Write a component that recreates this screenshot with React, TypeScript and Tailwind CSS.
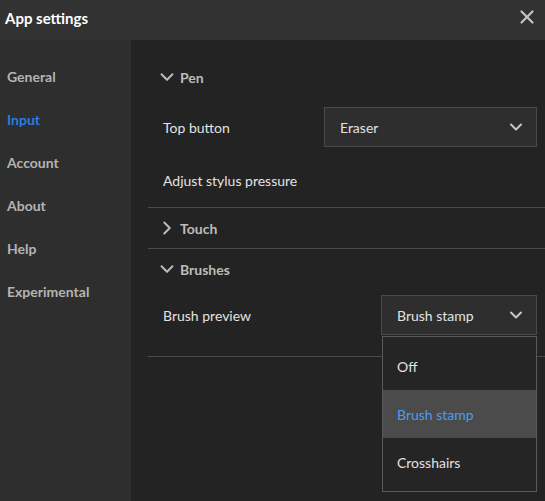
import { ChevronDown, ChevronRight, X } from 'lucide-react';

const navItems = ['General', 'Input', 'Account', 'About', 'Help', 'Experimental'];

function SectionHeader({ label, open }: { label: string; open: boolean }) {
  return (
    <div className="flex h-[40px] items-center gap-[2px] pl-[8px] text-[14px] font-bold text-[#bcbcbc]">
      {open ? (
        <ChevronDown className="h-[22px] w-[22px]" strokeWidth={2.2} />
      ) : (
        <ChevronRight className="h-[22px] w-[22px]" strokeWidth={2.2} />
      )}
      <span>{label}</span>
    </div>
  );
}

function Select({ value, width }: { value: string; width: string }) {
  return (
    <div
      className={`flex h-[40px] items-center justify-between border border-[#4a4a4a] bg-[#2e2e2e] pl-[15px] pr-[10px] text-[14px] text-[#e2e2e2] ${width}`}
    >
      <span>{value}</span>
      <ChevronDown className="h-[20px] w-[20px] text-[#c8c8c8]" strokeWidth={2.4} />
    </div>
  );
}

export default function App() {
  const options = ['Off', 'Brush stamp', 'Crosshairs'];

  return (
    <div
      className="flex h-[501px] w-[545px] flex-col bg-[#232323] text-[14px]"
      style={{ fontFamily: 'Lato, "Noto Sans", sans-serif' }}
    >
      <header className="flex h-[40px] shrink-0 items-start justify-between bg-[#323232] pl-[5px] pr-[7px]">
        <h1 className="mt-[7px] text-[15px] font-bold leading-[22px] text-white">App settings</h1>
        <X className="mt-[6px] h-[22px] w-[22px] text-[#c4c4c4]" strokeWidth={2.4} />
      </header>

      <div className="flex min-h-0 flex-1">
        <nav className="flex w-[131px] shrink-0 flex-col gap-[21px] bg-[#2e2e2e] pl-[7px] pt-[26px]">
          {navItems.map((item) => (
            <div
              key={item}
              className={`h-[22px] font-bold leading-[22px] ${
                item === 'Input' ? 'text-[#2b7be3]' : 'text-[#b4b4b4]'
              }`}
            >
              {item}
            </div>
          ))}
        </nav>

        <main className="flex-1 pl-[17px] pt-[17px]">
          <SectionHeader label="Pen" open />
          <div className="flex h-[60px] items-center justify-between pl-[15px] pr-[8px]">
            <span className="text-[#e2e2e2]">Top button</span>
            <Select value="Eraser" width="w-[213px]" />
          </div>
          <div className="flex h-[50px] items-center pb-[4px] pl-[15px] text-[#e2e2e2]">
            Adjust stylus pressure
          </div>
          <div className="border-t border-[#4a4a4a]">
            <SectionHeader label="Touch" open={false} />
          </div>
          <div className="border-t border-[#4a4a4a]">
            <SectionHeader label="Brushes" open />
            <div className="flex h-[52px] items-center justify-between pl-[15px] pr-[8px]">
              <span className="text-[#e2e2e2]">Brush preview</span>
              <div className="relative">
                <Select value="Brush stamp" width="w-[156px]" />
                <div className="absolute left-[1px] top-[41px] z-10 w-[155px] border border-[#5a5a5a] bg-[#252525] py-[5px]">
                  {options.map((opt) => (
                    <div
                      key={opt}
                      className={`flex h-[48px] items-center pl-[14px] ${
                        opt === 'Brush stamp'
                          ? 'bg-[#4b4b4b] text-[#4d9bef]'
                          : 'text-[#e2e2e2]'
                      }`}
                    >
                      {opt}
                    </div>
                  ))}
                </div>
              </div>
            </div>
            <div className="mt-[15px] border-t border-[#4a4a4a]" />
          </div>
        </main>
      </div>
    </div>
  );
}
